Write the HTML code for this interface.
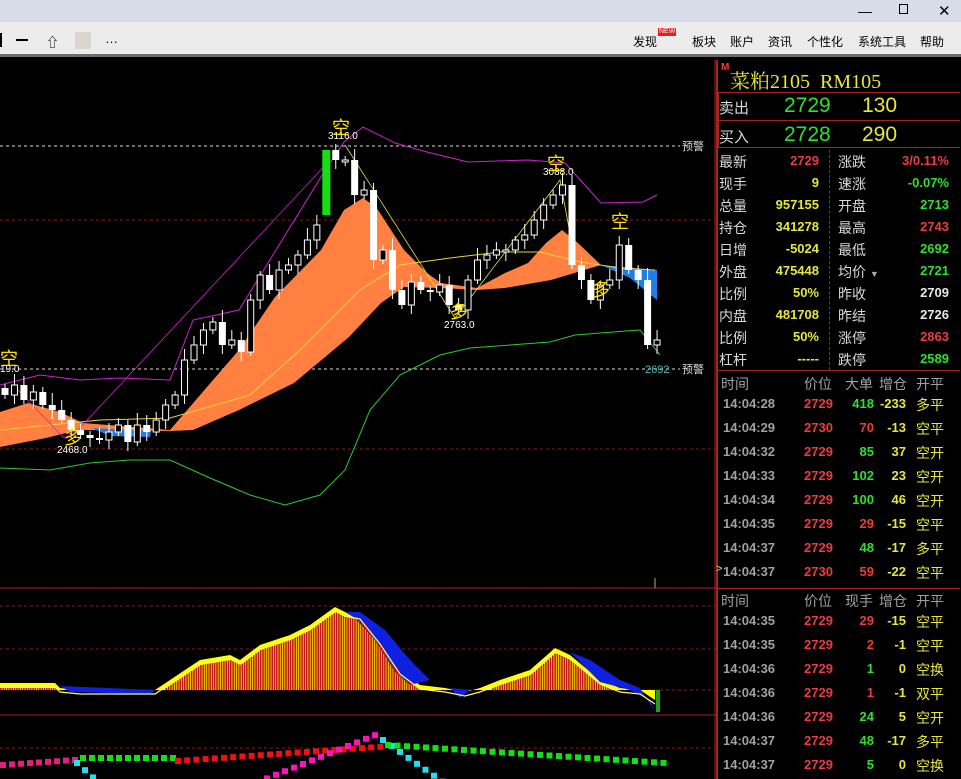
<!DOCTYPE html>
<html><head><meta charset="utf-8">
<style>
*{margin:0;padding:0;box-sizing:border-box}
body{width:961px;height:779px;overflow:hidden;background:#000;font-family:"Liberation Sans","Noto Sans CJK SC",sans-serif;position:relative}
#title{position:absolute;left:0;top:0;width:961px;height:22px;background:#d7dce8}
#tool{position:absolute;left:0;top:22px;width:961px;height:35px;background:#ececec;border-bottom:3px solid #6d6d6d}
.t{position:absolute;font-size:12px;color:#000;white-space:nowrap}
#rp{position:absolute;left:716px;top:60px;width:245px;height:719px}
.a{position:absolute;white-space:nowrap}
.lb{font-size:14px;color:#d8d8d8}
.n{font-size:13px;font-weight:bold;text-align:right}
.y{color:#e6e63c}.r{color:#ee3b3b}.g{color:#2ee02e}.w{color:#e8e8e8}.gr{color:#a0a0a0}
.hd{font-size:14px;color:#a0a0a0}
</style></head><body>
<div id="title">
 <div class="t" style="left:858px;top:3px;font-size:14px">—</div>
 <div class="t" style="left:899px;top:4px;width:9px;height:10px;border:1px solid #000"></div>
 <div class="t" style="left:938px;top:2px;font-size:15px">✕</div>
</div>
<div id="tool">
 <div class="t" style="left:0;top:11px;width:2px;height:14px;background:#000"></div>
 <div class="t" style="left:16px;top:17px;width:12px;height:1.5px;background:#000"></div>
 <div class="t" style="left:46px;top:10px;font-size:13px">⇧</div>
 <div class="t" style="left:75px;top:10px;width:16px;height:17px;background:#d9d5cd"></div>
 <div class="t" style="left:105px;top:9px;font-size:13px">…</div>
 <div class="t" style="left:633px;top:11px">发现</div>
 <div class="t" style="left:658px;top:6px;background:#e02020;color:#fff;font-size:7px;padding:0 1px;line-height:8px">NEW</div>
 <div class="t" style="left:692px;top:11px">板块</div>
 <div class="t" style="left:730px;top:11px">账户</div>
 <div class="t" style="left:768px;top:11px">资讯</div>
 <div class="t" style="left:807px;top:11px">个性化</div>
 <div class="t" style="left:858px;top:11px">系统工具</div>
 <div class="t" style="left:920px;top:11px">帮助</div>
</div>

<svg id="ch" width="716" height="719" style="position:absolute;left:0;top:60px" viewBox="0 60 716 719">
 <g stroke="#8a1d1d" stroke-dasharray="3,3" stroke-width="1">
  <line x1="0" y1="220" x2="716" y2="220"/><line x1="0" y1="449" x2="716" y2="449"/>
  <line x1="0" y1="606" x2="716" y2="606"/><line x1="0" y1="649" x2="716" y2="649"/>
  <line x1="0" y1="690" x2="716" y2="690"/><line x1="0" y1="748" x2="716" y2="748"/>
 </g>
 <g stroke="#ddd" stroke-dasharray="3,3"><line x1="0" y1="146" x2="680" y2="146"/><line x1="0" y1="369" x2="680" y2="369"/></g>
 <line x1="0" y1="588" x2="716" y2="588" stroke="#a02525"/>
 <line x1="0" y1="715" x2="716" y2="715" stroke="#a02525"/>
 <line x1="715" y1="60" x2="715" y2="779" stroke="#a02525"/>
 <!-- orange band -->
 <path fill="#ff8040" d="M0,412 L28,403 L60,412 L83,423 L170,430 L207,387 L239,350 L275,297 L321,250 L344,210 L363,198 L376,207 L404,250 L427,273 L441,283 L477,288 L505,273 L528,263 L546,243 L562,230 L578,243 L601,265 L551,280 L505,288 L477,290 L441,288 L404,287 L381,303 L349,337 L294,383 L239,410 L193,430 L170,431 L78,430 L46,438 L0,447 Z"/>
 <path fill="#1e7ee8" d="M601,265 L657,270 L657,300 L630,278 Z M92,428 L151,431 L150,437 L110,436 Z"/>
 <polyline fill="none" stroke="#e6d23c" stroke-width="1" points="0,430 100,420 170,418 250,395 300,350 360,290 400,265 450,258 500,252 540,252 580,262 620,268 655,270"/>
 <polyline fill="none" stroke="#d020d0" points="0,385 40,375 80,380 120,378 170,380 193,320 239,310 321,177 344,142 363,127 395,143 427,152 468,162 528,160 565,163 583,183 601,203 643,202 657,195"/>
 <polyline fill="none" stroke="#d020d0" stroke-width="0.8" points="18,390 64,438 78,430 330,160"/>
 <polyline fill="none" stroke="#e0e040" stroke-width="0.8" points="345,145 455,318 560,180 575,260"/>
 <polyline fill="none" stroke="#2ec82e" points="0,468 50,470 90,463 130,460 170,460 210,478 250,495 285,505 320,495 345,470 370,410 400,375 440,355 470,348 510,345 550,342 575,335 640,330 660,355"/>
 <g id="cd"></g>
 <g font-size="10" fill="#fff" font-family="Liberation Sans">
  <text x="328" y="139">3116.0</text><text x="543" y="175">3088.0</text><text x="444" y="328">2763.0</text><text x="57" y="453">2468.0</text><text x="0" y="372">19.0</text>
 </g>
 <g font-size="18" fill="#ffe000" font-family="Noto Sans CJK SC"><text x="332" y="134">空</text><text x="547" y="170">空</text><text x="611" y="228">空</text><text x="0" y="365">空</text><text x="64" y="444">多</text><text x="450" y="318">多</text><text x="592" y="296">多</text></g>
 <text x="645" y="373" font-size="11" fill="#40c0c0">2692</text>
 <text x="682" y="150" font-size="11" fill="#ddd" font-family="Noto Sans CJK SC">预警</text>
 <text x="682" y="373" font-size="11" fill="#ddd" font-family="Noto Sans CJK SC">预警</text>
 <line x1="655" y1="578" x2="655" y2="588" stroke="#aaa"/>
 <g id="md"></g>
 <g id="dots"></g>
</svg>

<div id="rp">
 <div style="position:absolute;left:0;top:0;width:2px;height:719px;background:#a02525"></div>
 <div class="a" style="left:5px;top:2px;color:#ee3b3b;font-size:10px;font-weight:bold">M</div>
 <div class="a" style="left:14px;top:5px;color:#e6e63c;font-size:20px;font-family:'Liberation Serif','Noto Serif CJK SC',serif">菜粕2105&nbsp; RM105</div>
 <div style="position:absolute;left:2px;top:32px;width:242px;height:56px;border:1px solid #a02525;border-right:none"></div>
 <div style="position:absolute;left:2px;top:60px;width:242px;height:1px;background:#a02525"></div>
 <div style="position:absolute;left:2px;top:310px;width:242px;height:1px;background:#a02525"></div>
 <div style="position:absolute;left:113px;top:90px;width:0;height:220px;border-left:1px dashed #a02525"></div>
 <div class="a lb" style="left:3px;top:37px;font-size:15px">卖出</div>
 <div class="a g" style="left:68px;top:34px;font-size:21px">2729</div>
 <div class="a y" style="left:146px;top:34px;font-size:21px">130</div>
 <div class="a lb" style="left:3px;top:66px;font-size:15px">买入</div>
 <div class="a g" style="left:68px;top:63px;font-size:21px">2728</div>
 <div class="a y" style="left:146px;top:63px;font-size:21px">290</div>
 <div id="info"></div>
 <div id="tl"></div>
 <div style="position:absolute;left:2px;top:528px;width:242px;height:1px;background:#a02525"></div>
</div>

<script>
var S='http://www.w3.org/2000/svg';
function el(p,t,a){var e=document.createElementNS(S,t);for(var k in a)e.setAttribute(k,a[k]);p.appendChild(e);return e;}
var cl=[395,385,400,392,405,410,420,430,435,438,440,432,425,442,425,432,420,405,395,360,345,330,322,345,340,352,300,275,290,270,265,255,240,225,150,160,160,195,190,260,250,290,305,282,290,292,285,305,310,280,260,255,250,250,240,235,220,205,195,185,265,280,300,285,280,245,270,280,345,340];
var cd=document.getElementById('cd'),o=388;
for(var i=0;i<cl.length;i++){var x=5+i*9.45,c=cl[i],t=Math.min(o,c),b=Math.max(o,c);if(b-t<2)b=t+2;
 var h=t-(4+(i*7)%9),l=b+(4+(i*5)%10);
 if(i==34){el(cd,'rect',{x:x-4,y:150,width:8,height:65,fill:'#11e011'});o=c;continue;}
 el(cd,'line',{x1:x,y1:h,x2:x,y2:l,stroke:'#fff'});
 if(c>o)el(cd,'rect',{x:x-3.5,y:t,width:7,height:b-t,fill:'#fff'});
 else el(cd,'rect',{x:x-3,y:t,width:6,height:b-t,fill:'#000',stroke:'#fff'});
 o=c;}
// MACD
var env=[[0,683],[55,683],[60,688],[80,690],[155,690],[200,660],[230,655],[240,660],[260,645],[290,635],[310,625],[335,607],[345,612],[360,615],[380,640],[400,670],[420,685],[445,688],[465,692],[480,688],[500,680],[530,670],[555,648],[570,655],[600,680],[620,688],[640,690],[655,700]];
function f(x){for(var i=1;i<env.length;i++)if(x<=env[i][0]){var a=env[i-1],b=env[i];return a[1]+(b[1]-a[1])*(x-a[0])/(b[0]-a[0]);}return 700;}
var md=document.getElementById('md');
var yp='M0,690 ';env.forEach(function(p){yp+='L'+p[0]+','+p[1]+' ';});yp+='L655,690 Z';
el(md,'path',{d:yp,fill:'#ffff00'});
el(md,'path',{d:'M345,612 L360,612 L385,630 L410,660 L430,680 L410,685 L395,672 L375,640 L355,618 Z M570,652 L590,660 L620,680 L640,688 L655,712 L650,700 L630,690 L600,682 Z M60,686 L155,690 L150,694 L70,692 Z M450,688 L470,690 L460,698 Z',fill:'#1020e0'});
for(var x=0;x<650;x+=2.3){var y=f(x)+5;if(y<689)el(md,'rect',{x:x,y:y,width:1.6,height:690-y,fill:'#c01818'});}
el(md,'polyline',{points:env.map(function(p){return p[0]+','+(p[1]+4)}).join(' '),fill:'none',stroke:'#ffff60','stroke-width':1.2});
el(md,'rect',{x:656,y:690,width:4,height:22,fill:'#20a020'});
// dots
var dt=document.getElementById('dots');
function dl(pts,col,s){pts.forEach(function(p){el(dt,'rect',{x:p[0],y:p[1],width:s||6,height:s||6,fill:col});});}
var a=[];for(var x=0;x<75;x+=9)a.push([x,762-x*0.07]);dl(a,'#e0207a');
a=[];for(var x=74;x<100;x+=8)a.push([x,760+(x-74)*0.9]);dl(a,'#20e0f0');
a=[];for(var x=80;x<175;x+=9)a.push([x,755]);dl(a,'#11e011');
a=[];for(var x=175;x<385;x+=9.2)a.push([x,758-(x-175)*0.07]);dl(a,'#f01010');
a=[];for(var x=255;x<375;x+=9)a.push([x,779-(x-255)*0.4]);dl(a,'#ff10c0');
a=[];for(var x=380;x<440;x+=8.5)a.push([x,737+(x-380)*0.7]);dl(a,'#20e0f0');
a=[];for(var x=385;x<665;x+=9.5)a.push([x,742+(x-385)*0.065]);dl(a,'#11e011');
// info
var L=[['最新','2729','r','涨跌','3/0.11%','r'],['现手','9','y','速涨','-0.07%','g'],['总量','957155','y','开盘','2713','g'],['持仓','341278','y','最高','2743','r'],['日增','-5024','y','最低','2692','g'],['外盘','475448','y','均价','2721','g'],['比例','50%','y','昨收','2709','w'],['内盘','481708','y','昨结','2726','w'],['比例','50%','y','涨停','2863','r'],['杠杆','-----','y','跌停','2589','g']];
var h='';L.forEach(function(r,i){var t=92+i*22;
h+='<div class="a lb" style="left:3px;top:'+t+'px">'+r[0]+'</div><div class="a n '+r[2]+'" style="right:142px;top:'+(t+1)+'px">'+r[1]+'</div><div class="a lb" style="left:122px;top:'+t+'px">'+r[3]+(i==5?' <span style="font-size:9px;color:#aaa">▼</span>':'')+'</div><div class="a n '+r[5]+'" style="right:12px;top:'+(t+1)+'px">'+r[4]+'</div>';});
document.getElementById('info').innerHTML=h;
function tbl(top,hdr,rows){var s='<div class="a hd" style="left:5px;top:'+top+'px">时间</div><div class="a hd" style="left:88px;top:'+top+'px">价位</div><div class="a hd" style="left:129px;top:'+top+'px">'+hdr+'</div><div class="a hd" style="left:163px;top:'+top+'px">增仓</div><div class="a hd" style="left:200px;top:'+top+'px">开平</div>';
rows.forEach(function(r,i){var t=top+22+i*24;s+='<div class="a n gr" style="left:7px;top:'+t+'px;text-align:left">'+r[0]+'</div><div class="a n r" style="left:88px;top:'+t+'px">'+r[1]+'</div><div class="a n '+r[3]+'" style="right:87px;top:'+t+'px">'+r[2]+'</div><div class="a n y" style="right:55px;top:'+t+'px">'+r[4]+'</div><div class="a y" style="left:200px;top:'+(t-1)+'px;font-size:14px">'+r[5]+'</div>';});return s;}
var T1=[['14:04:28','2729','418','g','-233','多平'],['14:04:29','2730','70','r','-13','空平'],['14:04:32','2729','85','g','37','空开'],['14:04:33','2729','102','g','23','空开'],['14:04:34','2729','100','g','46','空开'],['14:04:35','2729','29','r','-15','空平'],['14:04:37','2729','48','g','-17','多平'],['14:04:37','2730','59','r','-22','空平']];
var T2=[['14:04:35','2729','29','r','-15','空平'],['14:04:35','2729','2','r','-1','空平'],['14:04:36','2729','1','g','0','空换'],['14:04:36','2729','1','r','-1','双平'],['14:04:36','2729','24','g','5','空开'],['14:04:37','2729','48','g','-17','多平'],['14:04:37','2729','5','g','0','空换']];
document.getElementById('tl').innerHTML=tbl(314,'大单',T1)+tbl(531,'现手',T2)+'<div class="a y" style="left:0;top:503px;font-size:11px">&gt;</div>';
</script>
</body></html>
